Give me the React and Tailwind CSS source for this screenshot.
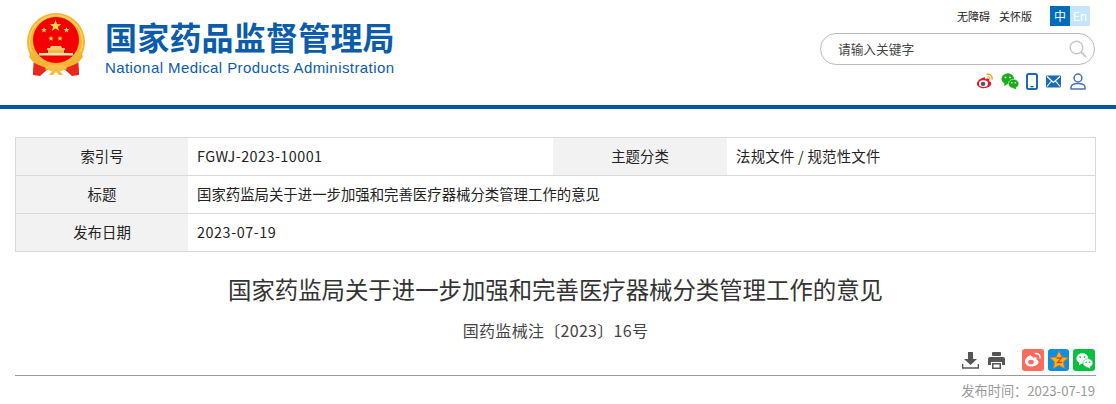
const Star = ({ x, y, r, fill = '#ffd84a' }) => {
  const pts = [];
  for (let i = 0; i < 10; i++) {
    const rad = i % 2 === 0 ? r : r * 0.42;
    const a = (Math.PI / 5) * i - Math.PI / 2;
    pts.push(`${x + rad * Math.cos(a)},${y + rad * Math.sin(a)}`);
  }
  return <polygon points={pts.join(' ')} fill={fill} />;
};

function Emblem() {
  return (
    <svg width="60" height="64" viewBox="0 0 60 64" className="block">
      <path d="M8 44 L7 62 L14 63 L22 56 L38 56 L46 63 L53 62 L52 44 Z" fill="#e8281c" />
      <circle cx="30" cy="29" r="29" fill="#f2b632" />
      <circle cx="30" cy="29" r="26.500" fill="none" stroke="#f8cf62" strokeWidth="1.500" />
      <circle cx="30" cy="27" r="23" fill="#f40000" />
      <Star x={29.500} y={13} r={6} />
      <Star x={18} y={17} r={3} />
      <Star x={40.500} y={17} r={3} />
      <Star x={25} y={25.500} r={2.800} />
      <Star x={34} y={25.500} r={2.800} />
      <path d="M25 33h10l1 2h3v2H21v-2h3z" fill="#f6c765" />
      <rect x="22" y="37" width="16" height="3" fill="#f0b84c" />
      <rect x="13" y="40" width="34" height="2.500" fill="#fbe3a8" />
      <path d="M5 38 C11 49 21 53 30 53 C39 53 49 49 55 38 L57 44 C49 55 39 58 30 58 C21 58 11 55 3 44Z" fill="#f2b632" />
      <path d="M8 50 L7 60 L14 61 L20 55 Z" fill="#e8281c" />
      <path d="M52 50 L53 60 L46 61 L40 55 Z" fill="#e8281c" />
      <path d="M22 52h16l2 4-6 2 3 4h-4l-3-3-3 3h-4l3-4-6-2z" fill="#f3be4a" />
    </svg>
  );
}

function Weibo({ size = 20 }) {
  return (
    <svg width={size} height={size} viewBox="0 0 20 20">
      <path d="M8.500 6C4.500 7 1 10.200 1 13c0 2.800 3.600 5 7.600 5 5 0 8.400-2.800 8.400-5.200 0-1.500-1.300-2.300-2.400-2.600.6-1.600.2-2.800-1.500-3-1 0-2.300.5-3 .8.300-1.400-.2-2.600-1.600-2Z" fill="#e6162d" />
      <ellipse cx="8.300" cy="13" rx="5" ry="3.700" fill="#fff" />
      <ellipse cx="7.800" cy="13.200" rx="2.600" ry="2.300" fill="#555" />
      <path d="M12.500 2.500c3-.6 6 2 5.300 5.500" fill="none" stroke="#f5a623" strokeWidth="1.600" strokeLinecap="round" />
      <path d="M13 5.300c1.300-.2 2.500 1 2.200 2.300" fill="none" stroke="#f5a623" strokeWidth="1.300" strokeLinecap="round" />
    </svg>
  );
}

function Wechat({ size = 20, color = '#1aad19', eye = '#fff' }) {
  return (
    <svg width={size} height={size} viewBox="0 0 20 20">
      <ellipse cx="7.500" cy="7.500" rx="7" ry="6" fill={color} />
      <path d="M4 11.500 3.500 15.500 8 13Z" fill={color} />
      <circle cx="5" cy="6" r="1" fill={eye} />
      <circle cx="10" cy="6" r="1" fill={eye} />
      <ellipse cx="14" cy="13" rx="5.800" ry="5" fill={color} stroke={eye} strokeWidth=".6" />
      <path d="M16 16.500 17 19.500 13 17.500Z" fill={color} />
      <circle cx="12" cy="12" r=".9" fill={eye} />
      <circle cx="16" cy="12" r=".9" fill={eye} />
    </svg>
  );
}

function TopIcons() {
  return (
    <div className="flex items-center justify-end gap-[7px] pr-[30px] h-[20px] mt-[6px]">
      <Weibo size={18} />
      <Wechat size={18} />
      <svg width="12" height="17" viewBox="0 0 12 17">
        <rect x="1" y="1" width="10" height="15" rx="1.500" fill="none" stroke="#1a6db5" strokeWidth="2" />
        <rect x="4.500" y="13" width="3" height="1.400" fill="#1a6db5" />
      </svg>
      <svg width="15" height="13" viewBox="0 0 15 13" className="ml-[1px]">
        <rect width="15" height="12" y=".5" rx="1" fill="#1a6db5" />
        <path d="M1 1.500 7.500 7.500 14 1.500M1 11.500 5.500 6M14 11.500 9.500 6" fill="none" stroke="#fff" strokeWidth="1.100" />
      </svg>
      <svg width="16" height="17" viewBox="0 0 16 17" className="ml-[2px]">
        <circle cx="8" cy="5" r="3.900" fill="none" stroke="#4a72b8" strokeWidth="1.500" />
        <path d="M1 16v-1.500C1 12 3.500 10.500 8 10.500s7 1.500 7 4V16Z" fill="none" stroke="#4a72b8" strokeWidth="1.500" strokeLinejoin="round" />
      </svg>
    </div>
  );
}

function Header() {
  return (
    <header className="h-[109px] border-b-4 border-[#0056a4] flex justify-between">
      <div className="flex pl-[26px] pt-[13px]">
        <Emblem />
        <div className="ml-[19px] pt-[5px] text-[#0b5cab]">
          <div className="text-[32px] leading-[36px] font-bold tracking-[0.200px] whitespace-nowrap">国家药品监督管理局</div>
          <div className="mt-[5px] text-[15px] leading-[18px] tracking-[0.420px] whitespace-nowrap font-['Liberation_Sans',sans-serif]">National Medical Products Administration</div>
        </div>
      </div>
      <div className="w-[296px] pt-[6px]">
        <div className="flex items-center justify-end pr-[26px] text-[11px] text-[#222] h-[20px]">
          <span>无障碍</span>
          <span className="ml-[9px]">关怀版</span>
          <div className="flex ml-[18px] w-[40px] h-[20px] text-[12px] leading-[20px] text-center text-white">
            <span className="w-[20px] bg-[#006cb8]">中</span>
            <span className="w-[20px] bg-[#c4e6fd]">En</span>
          </div>
        </div>
        <div className="mt-[7px] w-[275px] h-[32px] border border-[#bbb] rounded-full flex items-center justify-between pl-[17px] pr-[7px] text-[12.700px] text-[#444]">
          <span>请输入关键字</span>
          <svg width="18" height="18" viewBox="0 0 18 18">
            <circle cx="7.500" cy="7.500" r="6.300" fill="none" stroke="#c8c8c8" strokeWidth="1.400" />
            <path d="M12 12l5 5" stroke="#c8c8c8" strokeWidth="1.800" />
          </svg>
        </div>
        <TopIcons />
      </div>
    </header>
  );
}

const labelCell = 'bg-[#f2f2f2] text-center';
const rowLine = 'border-b border-[#d9d9d9]';

function InfoTable() {
  return (
    <div className="mx-[15px] mt-[28px] w-[1081px] border border-[#d9d9d9] text-[14.400px] text-[#222] leading-[36px]">
      <div className={`grid grid-cols-[172px_365px_174px_1fr] h-[38px] ${rowLine}`}>
        <div className={labelCell}>索引号</div>
        <div className="pl-[9px] tracking-[0.450px]">FGWJ-2023-10001</div>
        <div className={labelCell}>主题分类</div>
        <div className="pl-[9px] tracking-[0.250px]">法规文件 / 规范性文件</div>
      </div>
      <div className={`grid grid-cols-[172px_1fr] h-[38px] ${rowLine}`}>
        <div className={labelCell}>标题</div>
        <div className="pl-[9px]">国家药监局关于进一步加强和完善医疗器械分类管理工作的意见</div>
      </div>
      <div className="grid grid-cols-[172px_1fr] h-[37px]">
        <div className={labelCell}>发布日期</div>
        <div className="pl-[9px] tracking-[0.550px]">2023-07-19</div>
      </div>
    </div>
  );
}

function ActionIcons() {
  return (
    <div className="flex items-center justify-end h-[22px] pr-[1px]">
      <svg width="17" height="17" viewBox="0 0 17 17">
        <path d="M6 0h5v7h4l-6.500 6L2 7h4Z" fill="#555" />
        <path d="M0.500 12v4h16v-4" fill="none" stroke="#555" strokeWidth="1.600" />
      </svg>
      <svg width="17" height="17" viewBox="0 0 17 17" className="ml-[9px]">
        <rect x="4" y="0" width="9" height="4" rx="1" fill="#555" />
        <path d="M2 5h13a2 2 0 0 1 2 2v6h-3v-3H3v3H0V7a2 2 0 0 1 2-2Z" fill="#555" />
        <rect x="4" y="11" width="9" height="6" fill="#555" />
        <rect x="5.500" y="12.500" width="6" height="3" fill="#fff" />
      </svg>
      <div className="ml-[17px] w-[22px] h-[22px] rounded-[3px] bg-[#fb6b5e] flex items-center justify-center">
        <svg width="18" height="16" viewBox="0 0 18 16">
          <path d="M7 3C3.500 4 1 7 1 9.500 1 12.500 4 14.500 7.500 14.500c4 0 7-2.300 7-4.500 0-1.200-1-1.900-2-2.200.5-1.400.1-2.300-1.300-2.500-.9 0-2 .4-2.600.7.300-1.200-.2-2.400-1.600-2Z" fill="#fff" />
          <ellipse cx="7" cy="10" rx="2.800" ry="2.300" fill="#fb6b5e" />
          <path d="M11.500 1.500c2.600-.4 5 1.800 4.500 4.500" fill="none" stroke="#fff" strokeWidth="1.400" strokeLinecap="round" />
        </svg>
      </div>
      <div className="ml-[4px] w-[21px] h-[22px] rounded-[3px] bg-[#0a8fe6] flex items-center justify-center">
        <svg width="20" height="20" viewBox="0 0 20 20">
          <polygon points="10,1 12.700,7 19,7.700 14.300,12 15.700,18.500 10,15.200 4.300,18.500 5.700,12 1,7.700 7.300,7" fill="#fcb415" stroke="#e86a10" strokeWidth=".7" />
          <path d="M7.500 8h5l-4 4.500h4.500" fill="none" stroke="#d94a10" strokeWidth="1.300" />
        </svg>
      </div>
      <div className="ml-[4px] w-[22px] h-[22px] rounded-[3px] bg-[#07c03f] flex items-center justify-center">
        <Wechat size={17} color="#fff" eye="#07c03f" />
      </div>
    </div>
  );
}

function App() {
  return (
    <div className="w-[1116px] h-[404px] overflow-hidden bg-white font-['Noto_Sans_CJK_SC','Noto_Sans',sans-serif]">
      <Header />
      <InfoTable />
      <div className="mx-[15px] w-[1081px]">
        <h1 className="mt-[20px] text-center text-[23.400px] leading-[34px] text-[#333] whitespace-nowrap">国家药监局关于进一步加强和完善医疗器械分类管理工作的意见</h1>
        <p className="mt-[12px] text-center text-[16px] tracking-[0.300px] leading-[24px] text-[#444]">国药监械注〔2023〕16号</p>
        <div className="mt-[7px]">
          <ActionIcons />
        </div>
        <div className="mt-[4px] border-t border-[#999]" />
        <p className="mt-[6px] pr-[1px] text-right text-[13.200px] leading-[18px] text-[#999]">发布时间：2023-07-19</p>
      </div>
    </div>
  );
}

export default App;
